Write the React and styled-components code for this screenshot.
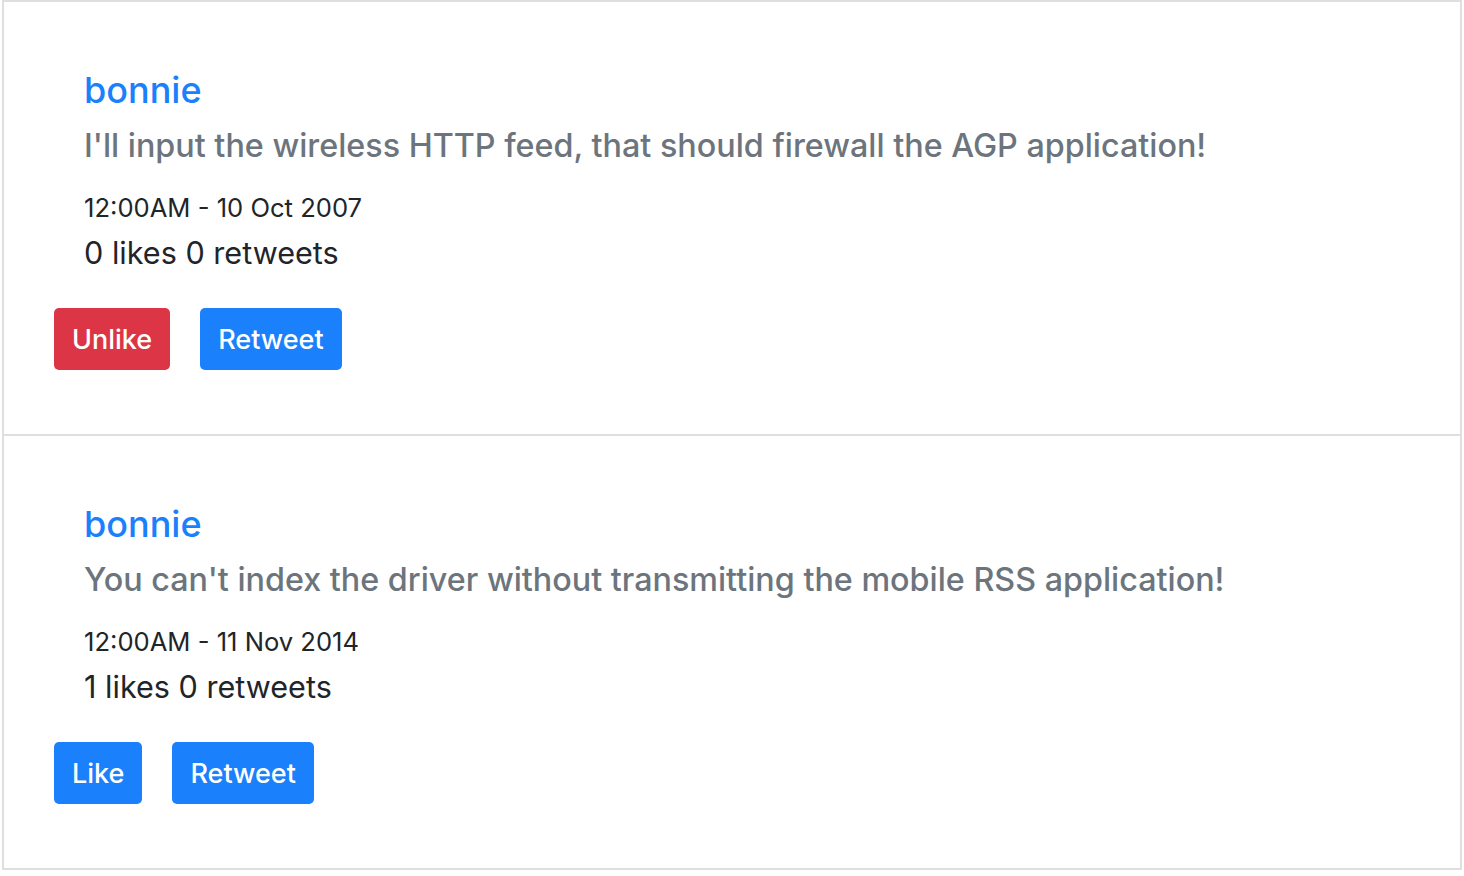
import React from "react";
import styled, { createGlobalStyle } from "styled-components";

const GlobalStyle = createGlobalStyle`
  body {
    margin: 0;
    font-family: Inter, "Noto Sans", "Liberation Sans", sans-serif;
    background: #fff;
  }
`;

const Feed = styled.div`
  margin: 0 2px;
  border: 2px solid #dfdfdf;
  border-bottom: none;
`;

const Tweet = styled.div`
  height: 432px;
  box-sizing: content-box;
  border-bottom: 2px solid #dfdfdf;
  padding: 0 50px;
  display: flex;
  flex-direction: column;
`;

const Body = styled.div`
  padding: 66px 30px 0;
`;

const Name = styled.div`
  font-size: 36px;
  line-height: 44px;
  font-weight: 500;
  color: #1a80fb;
`;

const Text = styled.div`
  margin-top: 15px;
  font-size: 32.3px;
  line-height: 38px;
  font-weight: 500;
  color: #6c757d;
`;

const Time = styled.div`
  margin-top: 27px;
  font-size: 25.6px;
  line-height: 32px;
  color: #212529;
`;

const Stats = styled.div`
  margin-top: 10px;
  font-size: 30.6px;
  line-height: 38px;
  color: #212529;
`;

const Actions = styled.div`
  margin-top: 36px;
  display: flex;
  gap: 30px;
`;

const Button = styled.button`
  height: 62px;
  padding: 0 18px;
  border: none;
  border-radius: 5px;
  font-family: inherit;
  font-size: 27px;
  font-weight: 500;
  color: #fff;
  background: ${(p) => (p.$danger ? "#dc3545" : "#1a80fb")};
  cursor: pointer;
`;

const tweets = [
  {
    user: "bonnie",
    text: "I'll input the wireless HTTP feed, that should firewall the AGP application!",
    time: "12:00AM - 10 Oct 2007",
    likes: 0,
    retweets: 0,
    liked: true
  },
  {
    user: "bonnie",
    text: "You can't index the driver without transmitting the mobile RSS application!",
    time: "12:00AM - 11 Nov 2014",
    likes: 1,
    retweets: 0,
    liked: false
  }
];

export default function App() {
  return (
    <>
      <GlobalStyle />
      <Feed>
        {tweets.map((t, i) => (
          <Tweet key={i}>
            <Body>
              <Name>{t.user}</Name>
              <Text>{t.text}</Text>
              <Time>{t.time}</Time>
              <Stats>
                {t.likes} likes {t.retweets} retweets
              </Stats>
            </Body>
            <Actions>
              <Button $danger={t.liked}>{t.liked ? "Unlike" : "Like"}</Button>
              <Button>Retweet</Button>
            </Actions>
          </Tweet>
        ))}
      </Feed>
    </>
  );
}
